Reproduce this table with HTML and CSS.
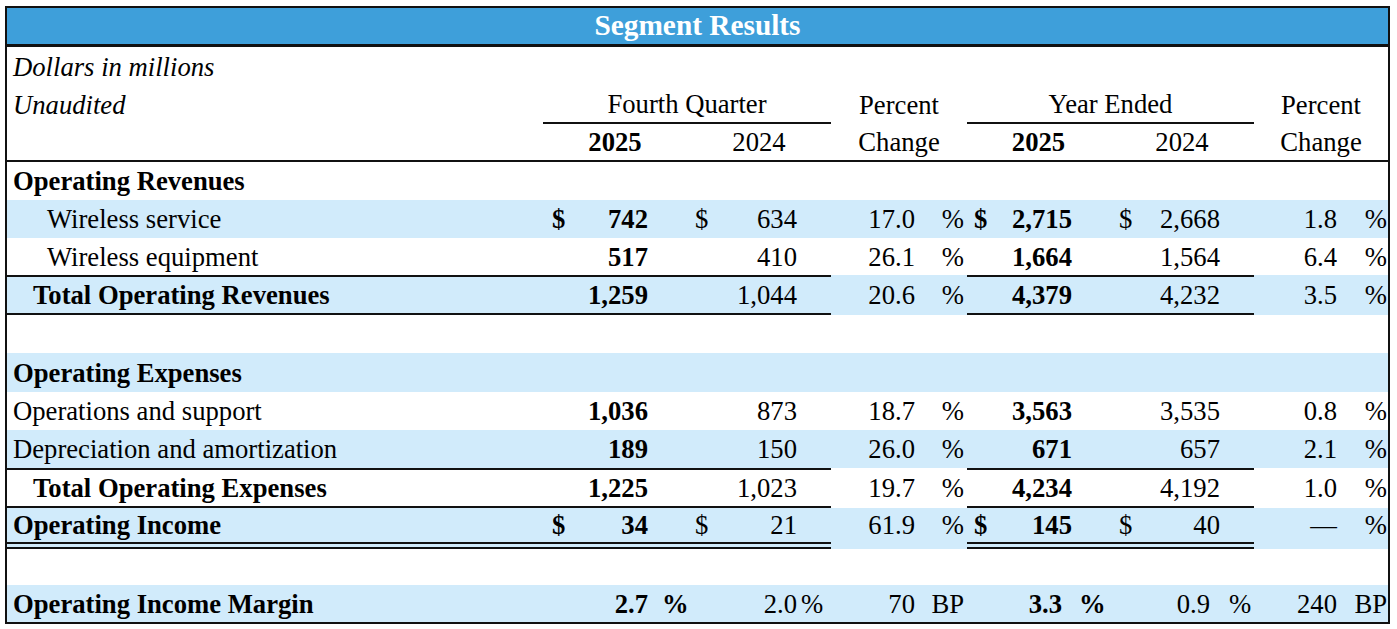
FILE: index.html
```html
<!DOCTYPE html>
<html lang="en">
<head>
<meta charset="utf-8">
<title>Segment Results</title>
<link rel="stylesheet" href="styles.css">
</head>
<body>
<div class="sheet">
  <div class="title">Segment Results</div>

  <div class="row h39">
    <div class="c lbl it">Dollars in millions</div>
  </div>
  <div class="row h38">
    <div class="c lbl it">Unaudited</div>
    <div class="c hc span2 ul">Fourth Quarter</div>
    <div class="c hc">Percent</div>
    <div class="c hc span2 ul">Year Ended</div>
    <div class="c hc">Percent</div>
  </div>
  <div class="row h38 years">
    <div class="c lbl"></div>
    <div class="c hc b">2025</div>
    <div class="c hc">2024</div>
    <div class="c hc">Change</div>
    <div class="c hc b">2025</div>
    <div class="c hc">2024</div>
    <div class="c hc">Change</div>
  </div>

  <div class="row h38">
    <div class="c lbl b">Operating Revenues</div>
  </div>
  <div class="row h38 band">
    <div class="c lbl ind2">Wireless service</div>
    <div class="c q1 b"><span>$</span><span class="v">742</span></div>
    <div class="c q2"><span>$</span><span class="v">634</span></div>
    <div class="c pq"><span>17.0</span><span class="sx">%</span></div>
    <div class="c y1 b"><span>$</span><span class="v">2,715</span></div>
    <div class="c y2"><span>$</span><span class="v">2,668</span></div>
    <div class="c py"><span>1.8</span><span class="sx">%</span></div>
  </div>
  <div class="row h37">
    <div class="c lbl ind2">Wireless equipment</div>
    <div class="c q1 b"><span class="v">517</span></div>
    <div class="c q2"><span class="v">410</span></div>
    <div class="c pq"><span>26.1</span><span class="sx">%</span></div>
    <div class="c y1 b"><span class="v">1,664</span></div>
    <div class="c y2"><span class="v">1,564</span></div>
    <div class="c py"><span>6.4</span><span class="sx">%</span></div>
  </div>
  <div class="row h40 band tot">
    <div class="c lbl ind1 b">Total Operating Revenues</div>
    <div class="c q1 b"><span class="v">1,259</span></div>
    <div class="c q2"><span class="v">1,044</span></div>
    <div class="c pq"><span>20.6</span><span class="sx">%</span></div>
    <div class="c y1 b"><span class="v">4,379</span></div>
    <div class="c y2"><span class="v">4,232</span></div>
    <div class="c py"><span>3.5</span><span class="sx">%</span></div>
  </div>

  <div class="row h38"></div>

  <div class="row h39 band">
    <div class="c lbl b">Operating Expenses</div>
  </div>
  <div class="row h38">
    <div class="c lbl">Operations and support</div>
    <div class="c q1 b"><span class="v">1,036</span></div>
    <div class="c q2"><span class="v">873</span></div>
    <div class="c pq"><span>18.7</span><span class="sx">%</span></div>
    <div class="c y1 b"><span class="v">3,563</span></div>
    <div class="c y2"><span class="v">3,535</span></div>
    <div class="c py"><span>0.8</span><span class="sx">%</span></div>
  </div>
  <div class="row h38 band">
    <div class="c lbl">Depreciation and amortization</div>
    <div class="c q1 b"><span class="v">189</span></div>
    <div class="c q2"><span class="v">150</span></div>
    <div class="c pq"><span>26.0</span><span class="sx">%</span></div>
    <div class="c y1 b"><span class="v">671</span></div>
    <div class="c y2"><span class="v">657</span></div>
    <div class="c py"><span>2.1</span><span class="sx">%</span></div>
  </div>
  <div class="row h40 tot">
    <div class="c lbl ind1 b">Total Operating Expenses</div>
    <div class="c q1 b"><span class="v">1,225</span></div>
    <div class="c q2"><span class="v">1,023</span></div>
    <div class="c pq"><span>19.7</span><span class="sx">%</span></div>
    <div class="c y1 b"><span class="v">4,234</span></div>
    <div class="c y2"><span class="v">4,192</span></div>
    <div class="c py"><span>1.0</span><span class="sx">%</span></div>
  </div>
  <div class="row h41 band oi">
    <div class="c lbl b">Operating Income</div>
    <div class="c q1 b"><span>$</span><span class="v">34</span></div>
    <div class="c q2"><span>$</span><span class="v">21</span></div>
    <div class="c pq"><span>61.9</span><span class="sx">%</span></div>
    <div class="c y1 b"><span>$</span><span class="v">145</span></div>
    <div class="c y2"><span>$</span><span class="v">40</span></div>
    <div class="c py"><span>—</span><span class="sx">%</span></div>
  </div>

  <div class="row h36"></div>

  <div class="row h37 band">
    <div class="c lbl b">Operating Income Margin</div>
    <div class="c mq1 b"><span>2.7</span><span class="ms">%</span></div>
    <div class="c mq2"><span>2.0</span><span class="ms">%</span></div>
    <div class="c pq"><span>70</span><span class="sx">BP</span></div>
    <div class="c my1 b"><span>3.3</span><span class="ms">%</span></div>
    <div class="c my2"><span>0.9</span><span class="ms">%</span></div>
    <div class="c py"><span>240</span><span class="sx">BP</span></div>
  </div>
</div>
</body>
</html>
```

FILE: styles.css
```css
* {
  box-sizing: border-box;
  margin: 0;
  padding: 0;
}

body {
  background: #ffffff;
  color: #000000;
  font-family: "Liberation Serif", "Times New Roman", serif;
}

.sheet {
  margin: 6px 0 0 5px;
  width: 1385px;
  border: 2px solid #111111;
  font-size: 26.67px;
}

.title {
  height: 39px;
  background: #3e9fda;
  border-bottom: 3px solid #111111;
  color: #ffffff;
  font-weight: bold;
  font-size: 29.33px;
  line-height: 34px;
  text-align: center;
}

.row {
  display: grid;
  grid-template-columns: 536px 144px 144px 136px 143px 144px 134px;
}

.h36 { height: 36px; }
.h37 { height: 37px; }
.h38 { height: 38px; }
.h39 { height: 39px; }
.h40 { height: 40px; }
.h41 { height: 41px; }

.band {
  background: #d1ebfb;
}

.c {
  display: flex;
  align-items: center;
  line-height: 30px;
  white-space: nowrap;
}

.b { font-weight: bold; }
.it { font-style: italic; }

.lbl { padding-left: 6px; }
.ind1 { padding-left: 26px; }
.ind2 { padding-left: 40px; }

.hc { justify-content: center; }
.span2 { grid-column: span 2; }
.ul { border-bottom: 2px solid #111111; }

.years {
  border-bottom: 2px solid #111111;
}

/* money columns */
.q1 { padding: 0 39px 0 9px; }
.q2 { padding: 0 34px 0 8px; }
.y1 { padding: 0 38px 0 7px; }
.y2 { padding: 0 34px 0 9px; }
.v { margin-left: auto; }

/* percent change columns */
.pq {
  justify-content: flex-end;
  padding-right: 3px;
}
.py {
  justify-content: flex-end;
  padding-right: 1px;
}
.pq .sx {
  width: 49px;
  text-align: right;
}
.py .sx {
  width: 50px;
  text-align: right;
}

/* margin row values */
.mq1, .mq2, .my1, .my2 {
  justify-content: flex-end;
}
.ms {
  flex: none;
  text-align: left;
}
.mq1 .ms { width: 39px; padding-left: 14px; }
.mq2 .ms { width: 34px; padding-left: 4px; }
.my1 { padding-right: 0; }
.my1 .ms { width: 48px; padding-left: 17px; }
.my2 .ms { width: 44px; padding-left: 19px; }

/* totals: rules above and below */
.tot .c {
  border-top: 2px solid #111111;
  border-bottom: 2px solid #111111;
}
.tot .pq,
.tot .py {
  border-color: transparent;
}

/* operating income: double rule below */
.oi .c {
  border-bottom: 7px double #111111;
}
.oi .pq,
.oi .py {
  border-bottom-color: transparent;
}
```
